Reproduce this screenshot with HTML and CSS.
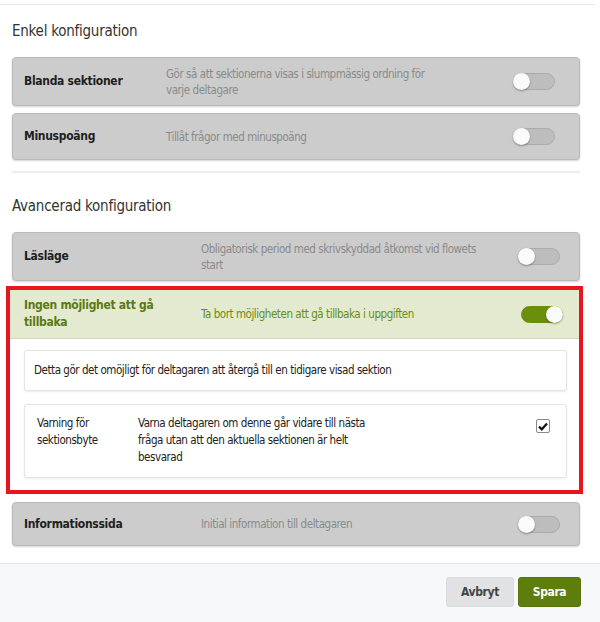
FILE: index.html
```html
<!DOCTYPE html>
<html lang="sv">
<head>
<meta charset="utf-8">
<title>Konfiguration</title>
<link rel="stylesheet" href="styles.css">
</head>
<body>
<div class="topline"></div>
<main class="content">
  <h2 class="heading">Enkel konfiguration</h2>
  <div class="card">
    <div class="card-title">Blanda sektioner</div>
    <div class="card-desc">Gör så att sektionerna visas i slumpmässig ordning för varje deltagare</div>
    <span class="toggle"><span class="knob"></span></span>
  </div>
  <div class="card card-gap">
    <div class="card-title">Minuspoäng</div>
    <div class="card-desc">Tillåt frågor med minuspoäng</div>
    <span class="toggle"><span class="knob"></span></span>
  </div>
  <hr class="sep">
  <h2 class="heading heading-adv">Avancerad konfiguration</h2>
  <div class="card card-adv">
    <div class="card-title">Läsläge</div>
    <div class="card-desc">Obligatorisk period med skrivskyddad åtkomst vid flowets start</div>
    <span class="toggle"><span class="knob"></span></span>
  </div>
  <div class="highlight">
    <div class="card-adv active-head">
      <div class="card-title">Ingen möjlighet att gå tillbaka</div>
      <div class="card-desc">Ta bort möjligheten att gå tillbaka i uppgiften</div>
      <span class="toggle on"><span class="knob"></span></span>
    </div>
    <div class="active-body">
      <div class="sub">Detta gör det omöjligt för deltagaren att återgå till en tidigare visad sektion</div>
      <div class="sub sub-row">
        <div class="sub-title">Varning för sektionsbyte</div>
        <div class="sub-desc">Varna deltagaren om denne går vidare till nästa fråga utan att den aktuella sektionen är helt besvarad</div>
        <span class="check"><svg width="10" height="9" viewBox="0 0 10 9"><path d="M1 4.6 L3.8 7.3 L9 1.5" fill="none" stroke="#111" stroke-width="2.2"/></svg></span>
      </div>
    </div>
  </div>
  <div class="card card-adv card-info">
    <div class="card-title">Informationssida</div>
    <div class="card-desc">Initial information till deltagaren</div>
    <span class="toggle"><span class="knob"></span></span>
  </div>
</main>
<footer class="footer">
  <button class="btn btn-cancel">Avbryt</button>
  <button class="btn btn-save">Spara</button>
</footer>
</body>
</html>
```
FILE: styles.css
```css
* { box-sizing: border-box; }
html, body { margin: 0; padding: 0; }
body {
  width: 600px;
  height: 622px;
  overflow: hidden;
  background: #fff;
  font-family: "DejaVu Sans Condensed", "DejaVu Sans", sans-serif;
  font-stretch: condensed;
  color: #222;
  display: flex;
  flex-direction: column;
}
.topline {
  height: 5px;
  width: 595px;
  border-bottom: 1px solid #e6e6e6;
}
.content {
  padding: 0 20px 0 12px;
  flex: 1;
}
.heading {
  font-size: 15px;
  letter-spacing: -0.25px;
  font-weight: normal;
  color: #333;
  margin: 17px 0 0;
  line-height: 18px;
}
.heading-adv { margin-top: 24px; }
.card {
  display: grid;
  grid-template-columns: 142px 1fr 66px;
  align-items: center;
  background: #cccccc;
  border: 1px solid #b9b9b9;
  border-radius: 4px;
  box-shadow: 0 1px 2px rgba(0,0,0,0.18);
  margin-top: 17px;
  min-height: 49px;
  padding: 7px 0 7px 11px;
}
.card-gap { margin-top: 7px; min-height: 47px; }
.card-adv { grid-template-columns: 177px 1fr 61px; margin-top: 17px; }
.card-title {
  font-weight: bold;
  font-size: 12px;
  letter-spacing: -0.3px;
  line-height: 17px;
  color: #1e1e1e;
}
.card-desc {
  font-size: 11.5px;
  letter-spacing: -0.45px;
  line-height: 16px;
  color: #8a8a8a;
  max-width: 280px;
}
.toggle {
  position: relative;
  width: 42px;
  height: 17px;
  border-radius: 9px;
  background: #bdbdbd;
  border: 1px solid #ababab;
}
.toggle .knob {
  position: absolute;
  left: -1px;
  top: -1px;
  width: 17px;
  height: 17px;
  border-radius: 50%;
  background: #fafafa;
  box-shadow: 0 1px 2px rgba(0,0,0,0.35);
}
.toggle.on { background: #6a8f0c; border-color: #6a8f0c; }
.toggle.on .knob { left: auto; right: -1px; }
.sep {
  border: 0;
  border-top: 2px solid #ececec;
  margin: 11px 0 0;
}
.highlight {
  border: 4px solid #e8141f;
  margin: 5px -3px 0 -6px;
}
.active-head {
  display: grid;
  align-items: center;
  grid-template-columns: 177px 1fr 58px;
  background: #e3eacf;
  border-bottom: 1px solid #d1d9bb;
  min-height: 49px;
  padding: 6px 0 6px 14px;
  margin: 0;
}
.active-head .card-title { color: #5a7a10; max-width: 145px; }
.active-head .card-desc { color: #6a8a14; max-width: 300px; }
.active-body {
  padding: 11px 12px 12px 14px;
  background: #fff;
}
.sub {
  background: #fff;
  border: 1px solid #e4e4e4;
  border-radius: 3px;
  box-shadow: 0 1px 2px rgba(0,0,0,0.08);
  font-size: 11.5px;
  letter-spacing: -0.45px;
  line-height: 17px;
  color: #222;
  padding: 11px 9px;
}
.sub-row {
  display: grid;
  grid-template-columns: 101px 1fr 30px;
  margin-top: 13px;
  padding: 10px 0 11px 12px;
}
.sub-title { max-width: 78px; }
.sub-desc { max-width: 252px; }
.check {
  width: 14px;
  height: 14px;
  margin-top: 4px;
  border: 1px solid #888;
  border-radius: 2px;
  display: flex;
  align-items: center;
  justify-content: center;
  background: #fff;
}
.card-info { margin-top: 8px; min-height: 44px; }
.footer {
  height: 59px;
  background: #f7f8fa;
  border-top: 1px solid #e6e6e6;
  display: flex;
  justify-content: flex-end;
  align-items: flex-start;
  gap: 4px;
  padding: 13px 19px 0 0;
}
.btn {
  font-family: inherit;
  font-stretch: inherit;
  font-weight: bold;
  font-size: 12px;
  letter-spacing: -0.4px;
  height: 30px;
  border: 1px solid transparent;
  border-radius: 3px;
  cursor: pointer;
}
.btn-cancel { width: 68px; background: #e1e2e3; color: #444; border-color: #dcdcdc; }
.btn-save { width: 63px; background: #5d7d0c; color: #fff; border-color: #57750a; }
```
